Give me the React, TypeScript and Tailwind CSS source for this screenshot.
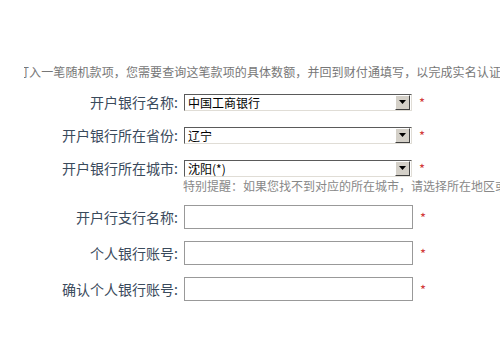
import React from "react";

type SelectRow = { label: string; value: string };
type InputRow = { label: string };

const selects: SelectRow[] = [
  { label: "开户银行名称:", value: "中国工商银行" },
  { label: "开户银行所在省份:", value: "辽宁" },
  { label: "开户银行所在城市:", value: "沈阳(*)" },
];

const inputs: InputRow[] = [
  { label: "开户行支行名称:" },
  { label: "个人银行账号:" },
  { label: "确认个人银行账号:" },
];

const Label: React.FC<{ text: string }> = ({ text }) => (
  <div className="w-[178px] shrink-0 text-right text-[14px] leading-[18px] text-[#3a4a5c]">{text}</div>
);

const Star = () => <span className="ml-[7px] text-[13px] leading-[13px] text-[#d23a3a]">*</span>;

const FakeSelect: React.FC<{ value: string }> = ({ value }) => (
  <div className="ml-[6px] flex h-[17px] w-[228px] items-center border-t border-l border-t-[#5a5a5a] border-l-[#5a5a5a] border-r border-b border-r-[#e0ddd6] border-b-[#e0ddd6] bg-white">
    <span className="flex-1 pl-[3px] text-[12px] leading-[15px] text-black">{value}</span>
    <div className="mr-[1px] flex h-[15px] w-[15px] items-center justify-center border-t border-l border-t-white border-l-white border-r border-b border-r-[#404040] border-b-[#404040] bg-[#d4d0c8]">
      <svg width="7" height="4" viewBox="0 0 7 4">
        <path d="M0 0h7L3.5 4z" fill="#000" />
      </svg>
    </div>
  </div>
);

export default function App() {
  return (
    <div className="h-[350px] w-[500px] overflow-hidden bg-white font-['Noto_Sans_CJK_SC','Noto_Sans',sans-serif]">
      <div className="ml-[24px] mt-[64px] overflow-hidden whitespace-nowrap text-[12px] leading-[16px] tracking-[0.1px] text-[#777]">
        <span className="-ml-[7px]">打入一笔随机款项，您需要查询这笔款项的具体数额，并回到财付通填写，以完成实名认证</span>
      </div>

      <div className="mt-[13px] flex flex-col">
        {selects.map((row, i) => (
          <div key={row.label} className={`flex items-center ${i > 0 ? "mt-[15px]" : ""}`}>
            <Label text={row.label} />
            <FakeSelect value={row.value} />
            <Star />
          </div>
        ))}

        <div className="ml-[183px] mt-[1px] whitespace-nowrap text-[12px] leading-[16px] text-[#888]">
          特别提醒：如果您找不到对应的所在城市，请选择所在地区或
        </div>

        {inputs.map((row, i) => (
          <div key={row.label} className={`flex items-center ${i === 0 ? "mt-[11px]" : "mt-[12px]"}`}>
            <Label text={row.label} />
            <div className="ml-[6px] h-[24px] w-[229px] border border-[#999] bg-white" />
            <Star />
          </div>
        ))}
      </div>
    </div>
  );
}
